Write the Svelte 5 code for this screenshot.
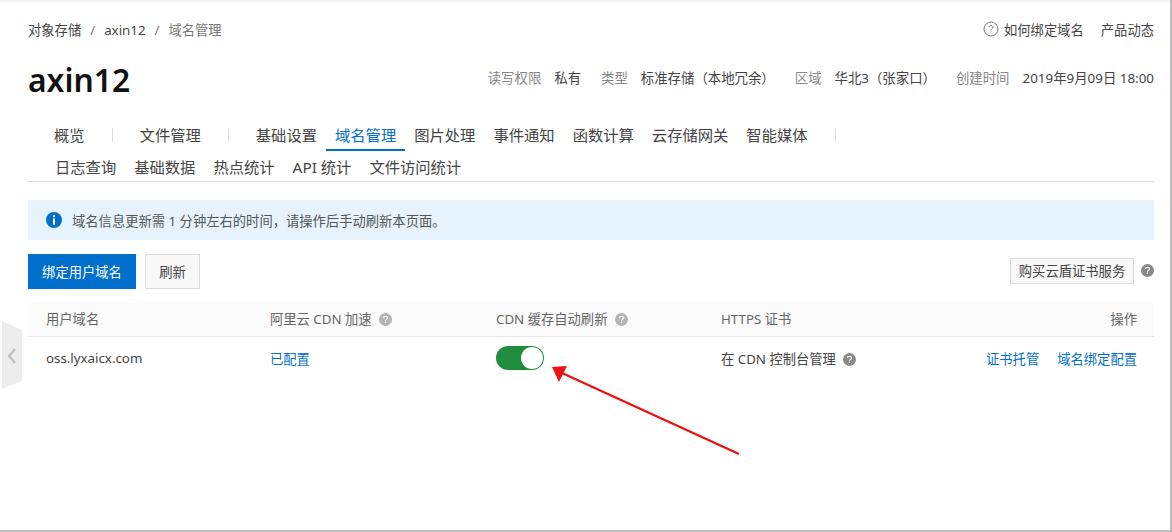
<script lang="ts">
	const firstRow = ['概览', '文件管理', '基础设置', '域名管理', '图片处理', '事件通知', '函数计算', '云存储网关', '智能媒体'];
	const secondRow = ['日志查询', '基础数据', '热点统计', 'API 统计', '文件访问统计'];
	const dividersAfter = ['概览', '文件管理', '智能媒体'];
	const meta = [
		['读写权限', '私有'],
		['类型', '标准存储（本地冗余）'],
		['区域', '华北3（张家口）'],
		['创建时间', '2019年9月09日 18:00']
	];
</script>

{#snippet help(cls = '')}
	<svg class="help {cls}" viewBox="0 0 14 14" aria-hidden="true">
		<circle cx="7" cy="7" r="7" fill="currentColor" />
		<path d="M4.9 5.4c0-1.2 1-1.9 2.1-1.9s2.1.7 2.1 1.8c0 1.5-2.1 1.6-2.1 3" fill="none" stroke="#fff" stroke-width="1.3" />
		<rect x="6.3" y="9.3" width="1.4" height="1.4" fill="#fff" />
	</svg>
{/snippet}

<div class="page">
	<div class="side-handle">
		<svg viewBox="0 0 20 68" width="20" height="68" aria-hidden="true">
			<polygon points="0,0 20,9 20,60 0,68" fill="#ececec" />
			<path d="M13 28 L7 35 L13 42" fill="none" stroke="#bcbcbc" stroke-width="2" />
		</svg>
	</div>

	<header class="crumbs">
		<div class="trail">
			<span>对象存储</span><i>/</i><span>axin12</span><i>/</i><span class="muted">域名管理</span>
		</div>
		<div class="links">
			<svg class="outline-help" viewBox="0 0 16 16" aria-hidden="true">
				<circle cx="8" cy="8" r="7" fill="none" stroke="#777" />
				<path d="M6 6.3c0-1.2.9-1.8 2-1.8s2 .6 2 1.7c0 1.4-2 1.5-2 3" fill="none" stroke="#777" />
				<rect x="7.5" y="10.4" width="1" height="1" fill="#777" />
			</svg>
			<span>如何绑定域名</span>
			<span class="news">产品动态</span>
		</div>
	</header>

	<div class="title-row">
		<h1>axin12</h1>
		<dl class="meta">
			{#each meta as [label, value]}
				<div><dt>{label}</dt><dd>{value}</dd></div>
			{/each}
		</dl>
	</div>

	<nav class="tabs">
		<div class="tab-row">
			{#each firstRow as tab}
				<span class="tab" class:active={tab === '域名管理'}>{tab}</span>
				{#if dividersAfter.includes(tab)}<span class="divider"></span>{/if}
			{/each}
		</div>
		<div class="tab-row second">
			{#each secondRow as tab}
				<span class="tab">{tab}</span>
			{/each}
		</div>
	</nav>

	<div class="notice">
		<svg viewBox="0 0 16 16" aria-hidden="true">
			<circle cx="8" cy="8" r="8" fill="#0070cc" />
			<rect x="7" y="3.2" width="2" height="2" fill="#fff" />
			<rect x="7" y="6.4" width="2" height="6.4" fill="#fff" />
		</svg>
		<span>域名信息更新需 1 分钟左右的时间，请操作后手动刷新本页面。</span>
	</div>

	<div class="toolbar">
		<button class="btn primary">绑定用户域名</button>
		<button class="btn refresh">刷新</button>
		<div class="toolbar-end">
			<button class="btn cert">购买云盾证书服务</button>
			{@render help('dark')}
		</div>
	</div>

	<div class="table">
		<div class="row head">
			<div>用户域名</div>
			<div>阿里云 CDN 加速 {@render help('spaced')}</div>
			<div>CDN 缓存自动刷新 {@render help('spaced')}</div>
			<div>HTTPS 证书</div>
			<div class="end">操作</div>
		</div>
		<div class="row body">
			<div>oss.lyxaicx.com</div>
			<div><span class="link">已配置</span></div>
			<div><span class="switch"><span class="knob"></span></span></div>
			<div>在 CDN 控制台管理 {@render help('dark spaced')}</div>
			<div class="end"><span class="link">证书托管</span><span class="link">域名绑定配置</span></div>
		</div>
	</div>

	<svg class="arrow" viewBox="0 0 1172 532" aria-hidden="true">
		<line x1="739" y1="454" x2="562" y2="373" stroke="#ee1111" stroke-width="2.4" />
		<polygon points="552,367 567,366 559,382" fill="#ee1111" />
	</svg>
</div>

<style>
	:global(body) {
		margin: 0;
		background: #fff;
	}

	.page {
		position: relative;
		box-sizing: border-box;
		width: 1172px;
		height: 532px;
		padding: 3px 16px 0 28px;
		overflow: hidden;
		border-right: 2px solid #bdbdbd;
		border-bottom: 2px solid #bdbdbd;
		box-shadow: inset 0 3px 2px -1px #f2f2f2;
		font-family: 'Noto Sans', 'Noto Sans CJK SC', sans-serif;
		font-size: 13.3px;
		color: #333;
	}

	.side-handle {
		position: absolute;
		left: 2px;
		top: 321px;
		height: 68px;
	}

	.crumbs {
		display: flex;
		justify-content: space-between;
		align-items: center;
		height: 20px;
		margin-top: 16px;
		color: #444;
	}

	.trail i {
		margin: 0 9px;
		font-style: normal;
		color: #777;
	}

	.muted {
		color: #777;
	}

	.links {
		display: flex;
		align-items: center;
	}

	.outline-help {
		width: 16px;
		height: 16px;
		margin-right: 5px;
	}

	.news {
		margin-left: 17px;
	}

	.title-row {
		display: flex;
		justify-content: space-between;
		align-items: center;
		height: 40px;
		margin-top: 21px;
	}

	h1 {
		margin: 0;
		font-size: 31.8px;
		font-weight: 600;
		color: #111;
		line-height: 40px;
	}

	.meta {
		display: flex;
		gap: 20px;
		margin: 0 0 6px;
		font-size: 13.4px;
	}

	.meta div {
		display: flex;
		gap: 13px;
	}

	.meta dt {
		color: #888;
	}

	.meta dd {
		margin: 0;
		color: #444;
	}

	.tabs {
		margin-top: 20px;
		padding-left: 17px;
		border-bottom: 1px solid #ddd;
		font-size: 15.3px;
		color: #444;
	}

	.tab-row {
		display: flex;
		align-items: center;
		height: 30px;
	}

	.second {
		height: 28px;
		margin-top: 3px;
		padding-left: 1px;
	}

	.tab {
		position: relative;
		padding: 0 9px;
		white-space: nowrap;
		line-height: 30px;
	}

	.active {
		color: #0070cc;
	}

	.active::after {
		content: '';
		position: absolute;
		left: 0;
		right: 0;
		bottom: -1px;
		height: 2px;
		background: #0070cc;
	}

	.divider {
		width: 1px;
		height: 14px;
		margin: 0 18px;
		background: #ddd;
	}

	.notice {
		display: flex;
		align-items: center;
		gap: 10px;
		height: 40px;
		margin-top: 18px;
		padding-left: 18px;
		background: #e6f3fc;
		color: #555;
	}

	.notice svg {
		width: 16px;
		height: 16px;
	}

	.toolbar {
		display: flex;
		align-items: center;
		gap: 9px;
		margin-top: 14px;
	}

	.toolbar-end {
		display: flex;
		align-items: center;
		gap: 5px;
		margin-left: auto;
		margin-bottom: 2px;
	}

	.btn {
		box-sizing: border-box;
		border: 1px solid #ddd;
		background: #f8f8f8;
		color: #444;
		font: inherit;
		padding: 0;
	}

	.primary {
		width: 108px;
		height: 35px;
		border-color: #0070cc;
		background: #0070cc;
		color: #fff;
	}

	.refresh {
		width: 55px;
		height: 35px;
	}

	.cert {
		width: 124px;
		height: 26px;
	}

	.help {
		width: 13px;
		height: 13px;
		margin-left: 2px;
		vertical-align: -2px;
		color: #b4b4b4;
	}

	.help.spaced {
		margin-left: 4px;
	}

	.dark {
		color: #888;
	}

	.table {
		margin-top: 14px;
	}

	.row {
		display: grid;
		grid-template-columns: 224px 226px 225px 225px 1fr;
		align-items: center;
	}

	.row > div {
		padding-left: 18px;
	}

	.row > .end {
		display: flex;
		justify-content: flex-end;
		gap: 18px;
		padding: 0 17px 0 0;
	}

	.head {
		height: 34px;
		padding-bottom: 2px;
		box-sizing: border-box;
		background: #fafafa;
		border-bottom: 1px solid #e8e8e8;
		color: #666;
	}

	.body {
		height: 42px;
		color: #444;
	}

	.link {
		color: #0070cc;
	}

	.switch {
		display: block;
		box-sizing: border-box;
		width: 48px;
		height: 24px;
		border-radius: 12px;
		background: #1e8e3e;
		position: relative;
	}

	.knob {
		position: absolute;
		right: 1px;
		top: 1px;
		width: 22px;
		height: 22px;
		border-radius: 50%;
		background: #fff;
	}

	.arrow {
		position: absolute;
		left: 0;
		top: 0;
		width: 1172px;
		height: 532px;
		pointer-events: none;
	}
</style>
